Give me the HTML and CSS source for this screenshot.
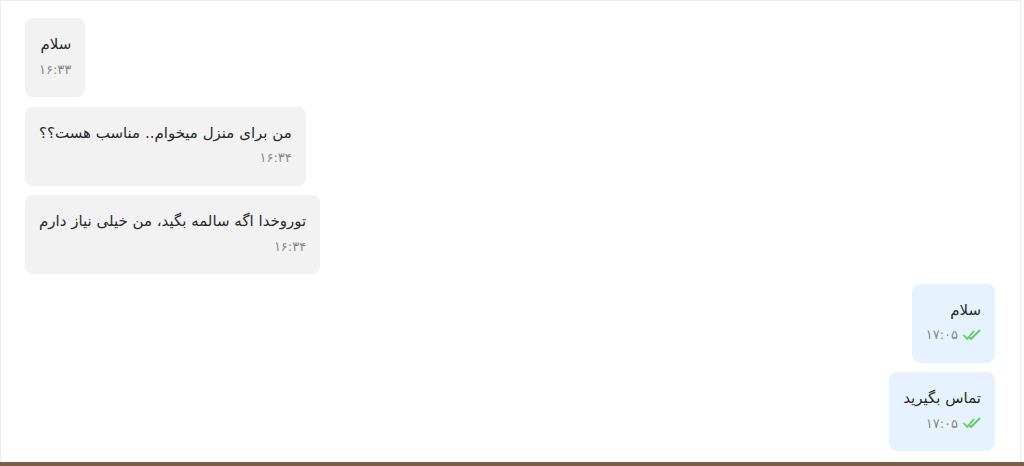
FILE: index.html
```html
<!DOCTYPE html>
<html lang="fa">
<head>
<meta charset="utf-8">
<link rel="stylesheet" href="styles.css">
</head>
<body>
<div class="chat">
  <div class="messages">
    <div class="msg in">
      <div class="text">سلام</div>
      <div class="meta"><span class="time">۱۶:۳۳</span></div>
    </div>
    <div class="msg in">
      <div class="text">من برای منزل میخوام.. مناسب هست؟؟</div>
      <div class="meta"><span class="time">۱۶:۳۴</span></div>
    </div>
    <div class="msg in">
      <div class="text">توروخدا اگه سالمه بگید، من خیلی نیاز دارم</div>
      <div class="meta"><span class="time">۱۶:۳۴</span></div>
    </div>
    <div class="msg out">
      <div class="text">سلام</div>
      <div class="meta">
        <svg class="check" viewBox="0 0 18 12" width="18" height="12"><path d="M1 6.5l3.2 3.5L10.5 2.5M7 9l1 1L16.5 1.5" fill="none" stroke="#5ccf5c" stroke-width="1.8" stroke-linecap="round" stroke-linejoin="round"/></svg>
        <span class="time">۱۷:۰۵</span>
      </div>
    </div>
    <div class="msg out">
      <div class="text">تماس بگیرید</div>
      <div class="meta">
        <svg class="check" viewBox="0 0 18 12" width="18" height="12"><path d="M1 6.5l3.2 3.5L10.5 2.5M7 9l1 1L16.5 1.5" fill="none" stroke="#5ccf5c" stroke-width="1.8" stroke-linecap="round" stroke-linejoin="round"/></svg>
        <span class="time">۱۷:۰۵</span>
      </div>
    </div>
  </div>
</div>
<div class="footer-bar"></div>
</body>
</html>
```
FILE: styles.css
```css
html, body {
  margin: 0;
  padding: 0;
  background: #ffffff;
}
body {
  font-family: "DejaVu Sans", sans-serif;
  color: #333;
}
.chat {
  border: 1px solid #ececec;
  border-bottom: none;
  width: 1021px;
  height: 462px;
  box-sizing: border-box;
  padding: 17px 25px 0 24px;
  background: #fff;
}
.messages {
  direction: rtl;
  display: flex;
  flex-direction: column;
  gap: 9.5px;
}
.msg {
  border-radius: 8px;
  padding: 12px 14px 18px 14px;
  height: 79px;
  box-sizing: border-box;
}
.msg.in {
  align-self: flex-end;
  background: #f2f2f2;
}
.msg.out {
  align-self: flex-start;
  background: #e6f2fe;
}
.text {
  font-size: 15px;
  line-height: 28px;
  color: #2b2b2b;
  white-space: nowrap;
}
.meta {
  display: flex;
  align-items: center;
  gap: 5px;
  height: 18px;
  margin-top: 2px;
}
.time {
  font-size: 13px;
  letter-spacing: 1px;
  color: #8a8a8a;
}
.check {
  display: block;
}
.footer-bar {
  height: 4px;
  background: #7b5e44;
}
```
